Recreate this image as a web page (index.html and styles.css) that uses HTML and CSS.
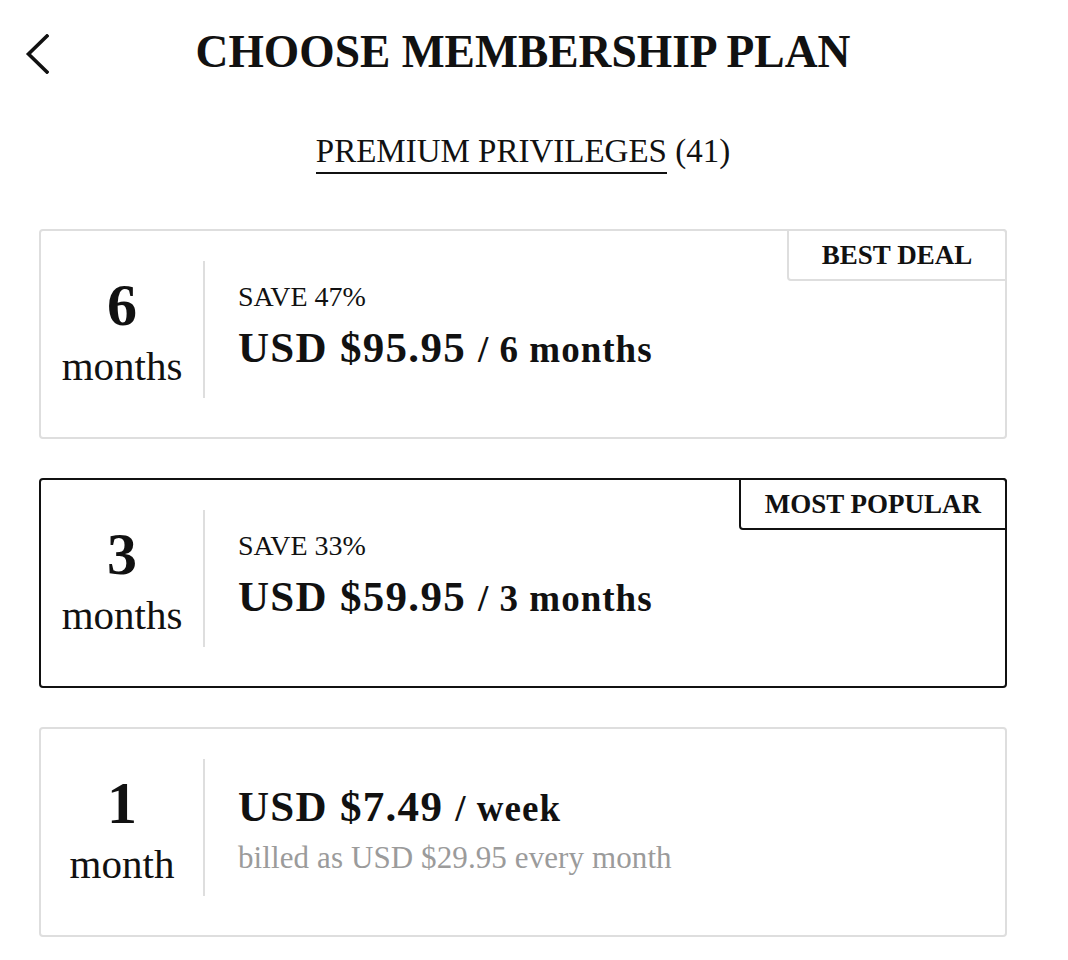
FILE: index.html
```html
<!DOCTYPE html>
<html lang="en">

<head>
    <meta charset="UTF-8">
    <meta name="viewport" content="width=device-width, initial-scale=1.0">
    <title>Choose membership plan</title>
    <link rel="stylesheet" href="styles.css">
</head>

<body>
    <div class="page">
        <header class="topBar">
            <button class="back" aria-label="Back">
                <svg width="24" height="40" viewBox="0 0 24 40">
                    <path d="M22 2 L3.5 20 L22 38" fill="none" stroke="#111" stroke-width="3.6" stroke-linecap="square" stroke-linejoin="miter" />
                </svg>
            </button>
            <h1 class="title">CHOOSE MEMBERSHIP PLAN</h1>
        </header>

        <div class="tabs">
            <a href="#" class="tabLink">PREMIUM PRIVILEGES</a> (41)
        </div>

        <div class="plans">
            <div class="plan">
                <div class="badge">BEST DEAL</div>
                <div class="term">
                    <div class="termNumber">6</div>
                    <div class="termUnit">months</div>
                </div>
                <div class="info">
                    <div class="save">SAVE 47%</div>
                    <div class="price">USD $95.95 <span class="per">/ 6 months</span></div>
                </div>
            </div>

            <div class="plan selected">
                <div class="badge">MOST POPULAR</div>
                <div class="term">
                    <div class="termNumber">3</div>
                    <div class="termUnit">months</div>
                </div>
                <div class="info">
                    <div class="save">SAVE 33%</div>
                    <div class="price">USD $59.95 <span class="per">/ 3 months</span></div>
                </div>
            </div>

            <div class="plan">
                <div class="term">
                    <div class="termNumber">1</div>
                    <div class="termUnit">month</div>
                </div>
                <div class="info">
                    <div class="price">USD $7.49 <span class="per">/ week</span></div>
                    <div class="billed">billed as USD $29.95 every month</div>
                </div>
            </div>
        </div>
    </div>
</body>

</html>
```

FILE: styles.css
```css
body {
    margin: 0;
    background: #fff;
    color: #111;
    font-family: "Liberation Serif", "Times New Roman", serif;
}

.page {
    width: 968px;
    margin-left: 39px;
}

.topBar {
    display: grid;
    grid-template-columns: 1fr auto 1fr;
    align-items: center;
    padding-top: 26px;
}

.back {
    justify-self: start;
    margin: 4px 0 0 -14px;
    padding: 0;
    border: 0;
    background: none;
    display: flex;
}

.title {
    margin: 0;
    font-size: 45.5px;
    line-height: 52px;
    font-weight: 700;
}

.tabs {
    margin-top: 53px;
    text-align: center;
    font-size: 33px;
    line-height: 40px;
}

.tabLink {
    display: inline-block;
    color: #111;
    text-decoration: none;
    border-bottom: 2px solid #111;
    padding-bottom: 1px;
}

.plans {
    margin-top: 55px;
    display: flex;
    flex-direction: column;
    gap: 39px;
}

.plan {
    position: relative;
    display: flex;
    align-items: center;
    padding: 30px 0 39px;
    border: 2px solid #dedede;
    border-radius: 4px;
}

.plan.selected {
    border-color: #111;
}

.badge {
    position: absolute;
    top: -2px;
    right: -2px;
    min-width: 220px;
    box-sizing: border-box;
    padding: 0 24px;
    border: 2px solid #dedede;
    border-radius: 0 4px 0 4px;
    text-align: center;
    font-size: 27px;
    line-height: 48px;
    font-weight: 700;
    background: #fff;
}

.selected .badge {
    border-color: #111;
}

.term {
    width: 164px;
    box-sizing: border-box;
    align-self: stretch;
    padding: 14px 0 1px;
    border-right: 2px solid #dedede;
    text-align: center;
}

.termNumber {
    font-size: 60px;
    line-height: 60px;
    font-weight: 700;
}

.termUnit {
    font-size: 41px;
    line-height: 62px;
}

.info {
    padding-left: 33px;
}

.save {
    font-size: 28px;
    line-height: 37px;
}

.price {
    font-size: 43px;
    line-height: 65px;
    font-weight: 700;
    letter-spacing: 1.3px;
}

.per {
    font-size: 37px;
    letter-spacing: 1px;
}

.billed {
    font-size: 31px;
    line-height: 33px;
    padding-bottom: 8px;
    letter-spacing: 0.1px;
    color: #9b9b9b;
}
```
